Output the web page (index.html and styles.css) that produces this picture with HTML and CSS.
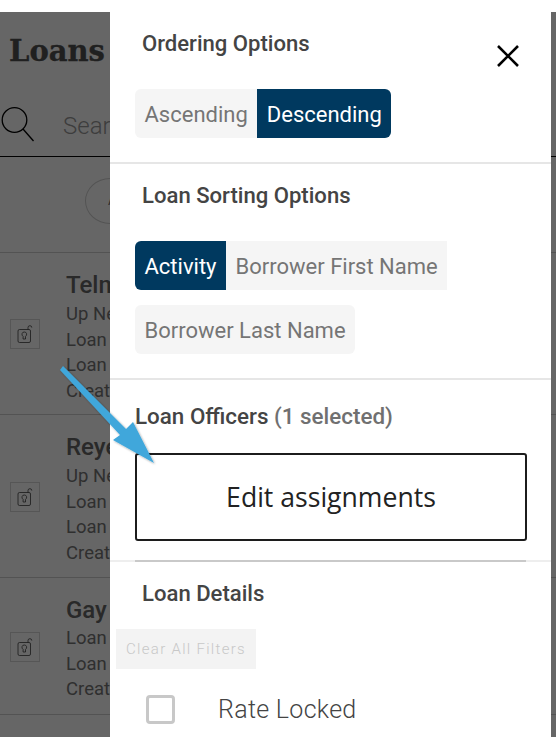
FILE: index.html
```html
<!DOCTYPE html>
<html lang="en">
<head>
<meta charset="utf-8">
<title>Loans</title>
<link rel="stylesheet" href="styles.css">
</head>
<body>
<div class="app">
  <h1 class="title">Loans</h1>
  <div class="search">
    <svg class="search-icon" width="36" height="38" viewBox="0 0 36 38"><circle cx="13.500" cy="15" r="12.300" fill="none" stroke="#000" stroke-width="1.300"/><path d="M22 24l10.500 12" fill="none" stroke="#000" stroke-width="1.300"/></svg>
    <span class="search-text">Search</span>
  </div>
  <div class="chip-row"><span class="chip">A</span></div>
  <div class="loan loan-a">
    <span class="lock"><svg width="16" height="18" viewBox="0 0 16 18"><rect x="1" y="4.500" width="12.500" height="13" rx="1.500" fill="none" stroke="#404040" stroke-width=".8"/><path d="M7.300 7a2.300 2.300 0 0 1 1.200 4.300V14H6.100v-2.700A2.300 2.300 0 0 1 7.300 7zM11 4.500V2.600a1.900 1.900 0 0 1 3.800 0" fill="none" stroke="#404040" stroke-width=".8"/></svg></span>
    <div class="loan-text"><div class="name">Telma</div><div>Up Next</div><div>Loan</div><div>Loan</div><div>Created</div></div>
  </div>
  <div class="loan loan-b">
    <span class="lock"><svg width="16" height="18" viewBox="0 0 16 18"><rect x="1" y="4.500" width="12.500" height="13" rx="1.500" fill="none" stroke="#404040" stroke-width=".8"/><path d="M7.300 7a2.300 2.300 0 0 1 1.200 4.300V14H6.100v-2.700A2.300 2.300 0 0 1 7.300 7zM11 4.500V2.600a1.900 1.900 0 0 1 3.800 0" fill="none" stroke="#404040" stroke-width=".8"/></svg></span>
    <div class="loan-text"><div class="name">Reyes</div><div>Up Next</div><div>Loan</div><div>Loan</div><div>Created</div></div>
  </div>
  <div class="loan loan-c">
    <span class="lock"><svg width="16" height="18" viewBox="0 0 16 18"><rect x="1" y="4.500" width="12.500" height="13" rx="1.500" fill="none" stroke="#404040" stroke-width=".8"/><path d="M7.300 7a2.300 2.300 0 0 1 1.200 4.300V14H6.100v-2.700A2.300 2.300 0 0 1 7.300 7zM11 4.500V2.600a1.900 1.900 0 0 1 3.800 0" fill="none" stroke="#404040" stroke-width=".8"/></svg></span>
    <div class="loan-text"><div class="name name-short">Gay</div><div>Loan</div><div>Loan</div><div>Created</div></div>
  </div>
</div>
<div class="scrim"></div>
<aside class="drawer">
  <section class="group group-order">
    <h2 class="heading">Ordering Options</h2>
    <button class="close" aria-label="Close"><svg width="24" height="24" viewBox="0 0 24 24"><path d="M2 2l20 20M22 2L2 22" stroke="#000" stroke-width="2.600" fill="none"/></svg></button>
    <div class="options">
      <span class="opt first">Ascending</span><span class="opt on last">Descending</span>
    </div>
  </section>
  <section class="group group-sort">
    <h2 class="heading">Loan Sorting Options</h2>
    <div class="options wrap">
      <span class="opt on first">Activity</span><span class="opt">Borrower First Name</span>
      <span class="opt rounded">Borrower Last Name</span>
    </div>
  </section>
  <section class="group group-officers">
    <h2 class="heading">Loan Officers <span class="muted">(1 selected)</span></h2>
    <button class="edit">Edit assignments</button>
  </section>
  <section class="group-details">
    <h2 class="heading">Loan Details</h2>
    <label class="check"><span class="box"></span><span class="check-label">Rate Locked</span></label>
  </section>
  <button class="clear">Clear All Filters</button>
</aside>
<svg class="arrow" width="110" height="110" viewBox="0 0 110 110"><defs><filter id="s" x="-20%" y="-20%" width="140%" height="140%"><feDropShadow dx="1" dy="1" stdDeviation="1" flood-color="#000" flood-opacity=".35"/></filter></defs><path d="M60 370L63 366L126 429L133 422L154 463L113 440L120 435Z" transform="translate(-50 -360)" fill="#3fa7db" filter="url(#s)"/></svg>
</body>
</html>
```
FILE: styles.css
```css
* { box-sizing: border-box; }
html, body { margin: 0; height: 100%; overflow: hidden; background: #fff; }
body { position: relative; font-family: Roboto, "Liberation Sans", sans-serif; width: 556px; height: 737px; }

.app { margin-top: 12px; height: 725px; overflow: hidden; }
.title { margin: 0; padding: 17px 0 0 9px; font: 700 29px/44px "DejaVu Serif", serif; height: 61px; color: #505050; -webkit-text-stroke: .3px #505050; }
.search { display: flex; align-items: center; height: 84px; border-bottom: 1.500px solid #000; padding: 18px 0 0 1px; }
.search-icon { flex: none; }
.search-text { margin: 5px 0 0 26px; font-size: 24px; font-weight: 300; color: #999; }
.chip-row { height: 96px; border-bottom: 1px solid #d0d0d0; padding: 21px 0 0 85px; }
.chip { display: block; width: 50px; height: 46px; border-radius: 50%; border: 1px solid #d0d0d0; padding: 13px 0 0 22px; font-size: 14px; color: #777; }
.loan { display: flex; border-bottom: 1px solid #d0d0d0; height: 162px; padding: 18px 0 0 10px; }
.loan-b { height: 163px; }
.loan-c { height: 137px; }
.lock { flex: none; display: flex; align-items: center; justify-content: center; width: 30px; height: 30px; border: 1px solid #d8d8d8; margin: 48px 26px 0 0; }
.loan-b .lock { margin-top: 49px; }
.loan-c .lock { margin-top: 36px; }
.loan-text { font-size: 18.500px; line-height: 25.700px; color: #777; white-space: nowrap; }
.name { font-size: 24px; font-weight: 500; line-height: 29px; margin-bottom: 2px; color: #666; }
.name-short { margin-bottom: 1px; }

.scrim { position: absolute; left: 0; right: 0; top: 12px; bottom: 0; background: rgba(0, 0, 0, .6); }

.drawer { position: absolute; left: 110px; top: 0; width: 441px; height: 737px; background: #fff; overflow: hidden; }
.group { position: relative; border-bottom: 2px solid #e6e6e6; }
.group-order { height: 164px; padding: 30px 0 0 32px; }
.group-sort { height: 216px; padding: 18px 0 0 32px; }
.group-officers { height: 182px; padding: 23px 0 0 25px; border-bottom-color: #eee; }
.group-details { padding: 18px 0 0 32px; }
.group-officers::after { content: ""; position: absolute; left: 25px; right: 25px; bottom: -2px; height: 2px; background: #c9c9c9; }
.heading { margin: 0; font-size: 22.100px; line-height: 26px; font-weight: 500; color: #444; white-space: nowrap; }
.group-officers .heading { font-size: 22.400px; }
.muted { color: #707070; }
.close { position: absolute; right: 31px; top: 44px; width: 24px; height: 24px; padding: 0; border: 0; background: none; }
.options { display: flex; margin: 33px 0 0 -7px; }
.wrap { flex-wrap: wrap; width: 345px; row-gap: 15px; }
.opt { height: 49px; padding: 0 9.500px; font-size: 22px; line-height: 51px; color: #757575; background: #f5f5f5; white-space: nowrap; }
.opt.first { border-radius: 6px 0 0 6px; }
.opt.last { border-radius: 0 6px 6px 0; }
.opt.rounded { border-radius: 6px; line-height: 52px; }
.opt.on { background: #00395f; color: #fff; }
.edit { display: block; width: 392px; height: 88px; margin-top: 24px; background: #fff; border: 2px solid #1c1c1c; border-radius: 3px; font: 400 26.600px "Open Sans", sans-serif; color: #222; }
.check { display: flex; align-items: center; margin: 88px 0 0 4px; }
.box { width: 29px; height: 29px; border: 3px solid #c8c8c8; border-radius: 4px; }
.check-label { margin: 1px 0 0 43px; font-size: 25px; font-weight: 300; color: #444; letter-spacing: .3px; }
.clear { position: absolute; left: 6px; top: 629px; width: 140px; height: 40px; border: 0; background: #f3f3f3; color: #c8c8c8; font: 300 15px Roboto, sans-serif; letter-spacing: 1.300px; padding: 0; }
.arrow { position: absolute; left: 50px; top: 360px; overflow: visible; }
```
